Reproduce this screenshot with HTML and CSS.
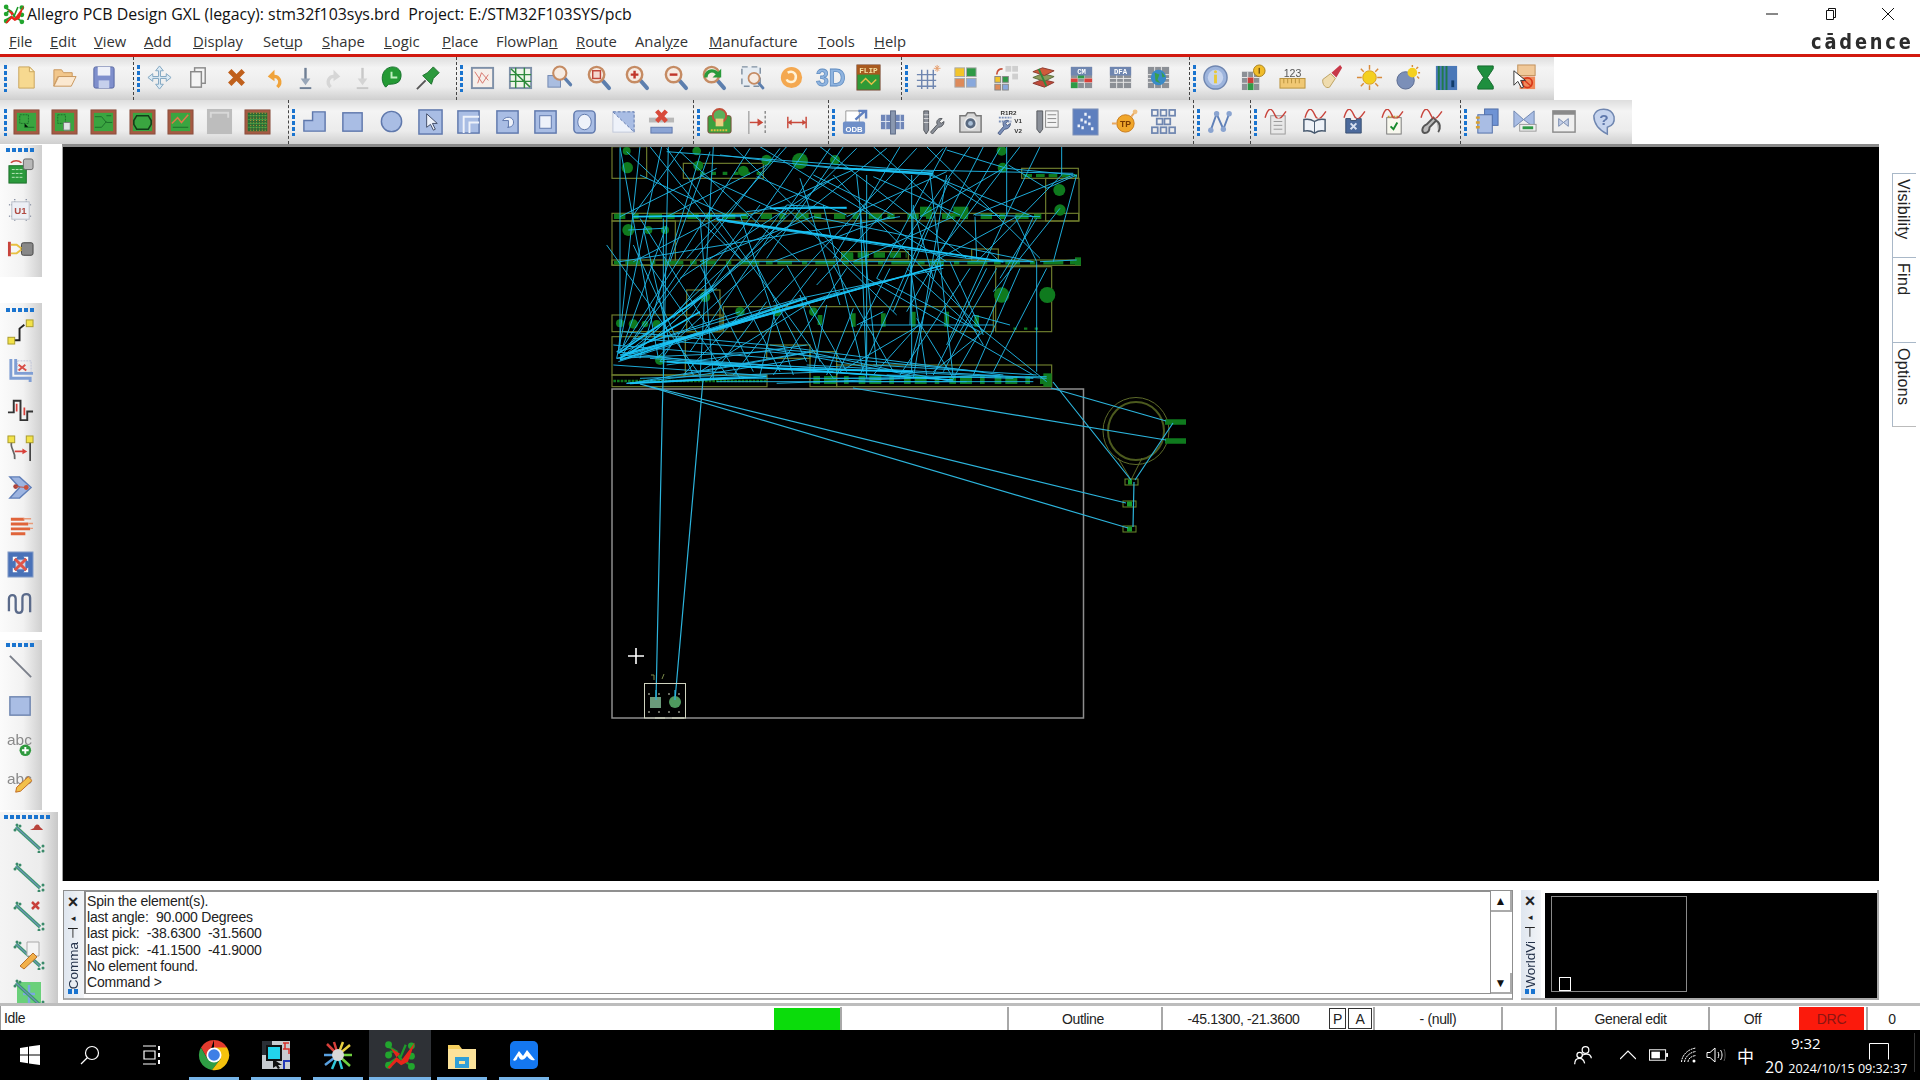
FILE: index.html
```html
<!DOCTYPE html>
<html lang="en">
<head>
<meta charset="utf-8">
<title>Allegro PCB Design GXL (legacy)</title>
<link rel="stylesheet" href="styles.css">
</head>
<body>
<svg class="defs" width="0" height="0" aria-hidden="true">
<symbol id="allegro" viewBox="0 0 28 28"><path d="M3 6l8 5 3 6 8 5M3 22l8-5M11 11l-6 0M19 5l-5 12" stroke="#1e9a2a" stroke-width="2" fill="none"/><circle cx="4" cy="5" r="3" fill="#22a52e"/><circle cx="4" cy="14" r="3" fill="#22a52e"/><circle cx="4" cy="23" r="3" fill="#22a52e"/><circle cx="24" cy="6" r="3" fill="#22a52e"/><circle cx="24" cy="15" r="3" fill="#22a52e"/><circle cx="24" cy="24" r="3" fill="#22a52e"/><path d="M3 25l8-9 4 3 12-16-6 17-6 3-4-3-6 6zM6 8l8 5-3 3z" fill="#e8251a"/></symbol>
<symbol id="board" viewBox="0 0 28 28"><rect x="1" y="2" width="26" height="25" fill="#a65a42" stroke="#8a5040"/><rect x="4" y="5" width="20" height="19" fill="#3aa540"/></symbol>
<symbol id="mag" viewBox="0 0 28 28"><path d="M18 17l7 8" stroke="#5d7fae" stroke-width="4" stroke-linecap="round"/><circle cx="12" cy="11" r="8" fill="#f6ebe2" stroke="#c58b63" stroke-width="2.500"/></symbol>
<symbol id="tbl" viewBox="0 0 28 28"><rect x="3" y="3" width="22" height="22" fill="#8c9096"/><path d="M3 11h22M3 15h22M3 19h22M10 3v22M17 3v22" stroke="#e8e8e8"/></symbol>
<symbol id="wave" viewBox="0 0 28 12"><path d="M1 11C5 -3 9 -2 13 7s7 6 14-4" stroke="#c8443c" stroke-width="1.800" fill="none"/></symbol>
<symbol id="net" viewBox="0 0 32 30"><path d="M3 4l24 22" stroke="#3a9a6a" stroke-width="3.400"/><path d="M3 4l24 22" stroke="#6d90b8" stroke-width="1.200"/><circle cx="4" cy="2" r="1.500" fill="#3a8a6a"/><circle cx="2" cy="7" r="1.500" fill="#3a8a6a"/><circle cx="7" cy="3" r="1.500" fill="#3a8a6a"/><circle cx="30" cy="23" r="1.500" fill="#3a8a6a"/><circle cx="30" cy="28" r="1.500" fill="#3a8a6a"/><circle cx="26" cy="29" r="1.500" fill="#3a8a6a"/></symbol>
</svg>

<header class="chrome">
  <div class="titlebar">
    <svg class="appicon"><use href="#allegro"/></svg>
    <span class="title">Allegro PCB Design GXL (legacy): stm32f103sys.brd&nbsp; Project: E:/STM32F103SYS/pcb</span>
    <div class="winctl">
      <svg viewBox="0 0 14 14"><path d="M1 7h12" stroke="#111"/></svg>
      <svg viewBox="0 0 14 14"><path d="M3.500 3.500h7v9h-7zM5.500 3.500v-2h7v9h-2" fill="none" stroke="#111"/></svg>
      <svg viewBox="0 0 14 14"><path d="M1 1l12 12M13 1L1 13" stroke="#111"/></svg>
    </div>
  </div>
  <div class="menubar">
    <nav class="menu">
      <span><u>F</u>ile</span><span><u>E</u>dit</span><span><u>V</u>iew</span><span><u>A</u>dd</span><span><u>D</u>isplay</span><span>Set<u>u</u>p</span><span><u>S</u>hape</span><span><u>L</u>ogic</span><span><u>P</u>lace</span><span>FlowPla<u>n</u></span><span><u>R</u>oute</span><span>Anal<u>y</u>ze</span><span><u>M</u>anufacture</span><span><u>T</u>ools</span><span><u>H</u>elp</span>
    </nav>
    <div class="logo">cādence</div>
  </div>
</header>

<section class="toolbars">
  <div class="tbrow r1">
    <div class="grp w133"><i class="grip"></i>
      <b><svg viewBox="0 0 28 28"><path d="M6 3h11l5 5v17H6z" fill="#f7d990" stroke="#c9a45c"/><path d="M17 3v5h5z" fill="#fff3c9" stroke="#c9a45c"/></svg></b>
      <b><svg viewBox="0 0 28 28"><path d="M3 23V6h8l2 3h9v4H7z" fill="#f2c78c" stroke="#c8965c"/><path d="M3 23l5-10h18l-5 10z" fill="#fbe8d0" stroke="#c8965c"/></svg></b>
      <b><svg viewBox="0 0 28 28"><rect x="4" y="3" width="21" height="22" rx="2" fill="#7f8fcc" stroke="#56669f"/><rect x="8" y="3" width="13" height="9" fill="#eef0f8"/><rect x="9" y="17" width="11" height="8" fill="#c6d0ec"/></svg></b>
    </div>
    <div class="grp w323"><i class="grip"></i>
      <b><svg viewBox="0 0 28 28"><path d="M14 2l4 5h-3v6h6v-3l5 4-5 4v-3h-6v6h3l-4 5-4-5h3v-6H7v3l-5-4 5-4v3h6V7h-3z" fill="#dceaf4" stroke="#7fa4bf"/></svg></b>
      <b><svg viewBox="0 0 28 28"><rect x="11" y="4" width="11" height="16" fill="#f4f4f4" stroke="#8a8a8a" stroke-width="1.500"/><rect x="7" y="8" width="11" height="16" fill="#f4f4f4" stroke="#8a8a8a" stroke-width="1.500"/></svg></b>
      <b><svg viewBox="0 0 28 28"><path d="M7 7l14 14M21 7L7 21" stroke="#c0601c" stroke-width="5"/></svg></b>
      <b class="narrow-a"><svg viewBox="0 0 28 28"><path d="M17 24c5-5 2-12-5-11" stroke="#f0a33a" stroke-width="3.500" fill="none"/><path d="M14 6l-7 7 7 5z" fill="#f0a33a"/></svg></b>
      <b class="narrow"><svg viewBox="0 0 28 28"><path d="M14 4v14" stroke="#6f7f95" stroke-width="2.500"/><path d="M9 15l5 7 5-7z" fill="#98a6b8"/><path d="M8 25h12" stroke="#6f7f95" stroke-width="2"/></svg></b>
      <b class="narrow"><svg viewBox="0 0 28 28"><path d="M11 24c-5-5-2-12 5-11" stroke="#d6d6d6" stroke-width="3.500" fill="none"/><path d="M14 6l7 7-7 5z" fill="#d6d6d6"/></svg></b>
      <b class="narrow"><svg viewBox="0 0 28 28"><path d="M14 4v14" stroke="#c8c8c8" stroke-width="2.500"/><path d="M9 15l5 7 5-7z" fill="#d4d4d4"/><path d="M8 25h12" stroke="#c8c8c8" stroke-width="2"/></svg></b>
      <b class="narrow-b"><svg viewBox="0 0 28 28"><path d="M8 24C2 18 3 4 15 3c9 0 11 9 7 15-3 3-8 3-11 3z" fill="#249a34" stroke="#14702a"/><path d="M14 8v6h6" stroke="#bff0bf" fill="none" stroke-width="2"/></svg></b>
      <b class="pin"><svg viewBox="0 0 28 28"><path d="M2 26l9-9" stroke="#555" stroke-width="2"/><path d="M8 12l9 9 2-6 6-6-6-6-6 6z" fill="#2d9a3e" stroke="#1b6e2b"/></svg></b>
    </div>
    <div class="grp w445 nudge"><i class="grip"></i>
      <b><svg viewBox="0 0 28 28"><rect x="3" y="4" width="22" height="21" fill="#f6efea" stroke="#7e90a8" stroke-width="2"/><path d="M6 8l8 12 6-9M9 20l4-11 7 8" stroke="#d6746a" fill="none"/></svg></b>
      <b><svg viewBox="0 0 28 28"><rect x="3" y="4" width="22" height="21" fill="#eef4ea" stroke="#7e90a8" stroke-width="2"/><path d="M9 4v21M18 4v21M3 11h22M3 18h22M4 5l20 19" stroke="#2d8a3c" stroke-width="1.500"/></svg></b>
      <b><svg viewBox="0 0 28 28"><rect x="2" y="12" width="13" height="12" fill="#a9bde0" stroke="#6f86b0"/><use href="#mag" x="4" y="0" width="24" height="24"/></svg></b>
      <b><svg viewBox="0 0 28 28"><use href="#mag"/><rect x="8" y="7" width="8" height="8" fill="#f4d8d0" stroke="#c0463a" stroke-width="1.500"/></svg></b>
      <b><svg viewBox="0 0 28 28"><use href="#mag"/><path d="M8 11h8M12 7v8" stroke="#c0362a" stroke-width="2.500"/></svg></b>
      <b><svg viewBox="0 0 28 28"><use href="#mag"/><path d="M8 11h8" stroke="#c0362a" stroke-width="2.500"/></svg></b>
      <b><svg viewBox="0 0 28 28"><use href="#mag"/><path d="M6 14c0-6 6-9 11-5l3 3" stroke="#2a9a3a" stroke-width="3.500" fill="none"/><path d="M22 5v9h-9z" fill="#2a9a3a"/></svg></b>
      <b><svg viewBox="0 0 28 28"><rect x="3" y="3" width="19" height="20" fill="#e6ecf2" stroke="#7e8ea0" stroke-width="1.500" stroke-dasharray="6 4"/><use href="#mag" x="7" y="7" width="20" height="20"/></svg></b>
      <b><svg viewBox="0 0 28 28"><circle cx="14" cy="14" r="11" fill="#f4a850"/><path d="M10 9c6-3 10 2 8 7-2 4-8 3-9 0" stroke="#fff3d8" stroke-width="2.500" fill="none"/></svg></b>
      <b><svg viewBox="0 0 28 28"><text x="0" y="23" class="t3d">3D</text></svg></b>
      <b><svg viewBox="0 0 28 28"><rect x="2" y="1" width="24" height="26" fill="#2f9a36" stroke="#7d4a38"/><rect x="2" y="1" width="24" height="10" fill="#a85a20"/><text x="14" y="9.500" class="tflip">FLIP</text><path d="M6 20l5-5 6 6 5-5" stroke="#e6c04a" fill="none" stroke-width="1.500"/></svg></b>
    </div>
    <div class="grp w288"><i class="grip"></i>
      <b><svg viewBox="0 0 28 28"><path d="M8 6v20M14 6v20M20 6v20M3 11h20M3 17h20M3 23h20" stroke="#6f86b0" stroke-width="1.500"/><path d="M24 1v7M20.500 4.500h7M22 2l4 5M26 2l-4 5" stroke="#e6a070"/></svg></b>
      <b><svg viewBox="0 0 28 28"><rect x="3" y="4" width="10" height="9" fill="#f2c42a" stroke="#aaa"/><rect x="15" y="4" width="10" height="9" fill="#2f9a46" stroke="#aaa"/><rect x="3" y="15" width="10" height="9" fill="#dd8a5a" stroke="#aaa"/><rect x="15" y="15" width="10" height="9" fill="#88a8dc" stroke="#aaa"/></svg></b>
      <b><svg viewBox="0 0 28 28"><rect x="15" y="2" width="6" height="6" fill="#cfcfcf"/><rect x="22" y="2" width="6" height="6" fill="#cfcfcf"/><rect x="22" y="10" width="6" height="6" fill="#cfcfcf"/><rect x="4" y="13" width="6" height="6" fill="#f2c42a" stroke="#888"/><rect x="12" y="13" width="6" height="6" fill="#2f9a46" stroke="#888"/><rect x="4" y="21" width="6" height="6" fill="#dd8a5a" stroke="#888"/><rect x="12" y="21" width="6" height="6" fill="#88a8dc" stroke="#888"/><path d="M6 11c0-5 3-6 6-6" stroke="#c8503a" stroke-width="1.800" fill="none"/></svg></b>
      <b><svg viewBox="0 0 28 28"><path d="M3 20l10-4 12 3-10 5z" fill="#c04a3a" stroke="#8a3a30"/><path d="M3 14l10-4 12 3-10 5z" fill="#8a9a5a" stroke="#5a6a3a"/><path d="M3 8l10-4 12 3-10 5z" fill="#d05a3a" stroke="#8a3a30"/><path d="M9 5l8 18" stroke="#2f8a3e" stroke-width="2"/></svg></b>
      <b><svg viewBox="0 0 28 28"><use href="#tbl"/><rect x="10" y="11" width="7" height="4" fill="#2f9a46"/><rect x="3" y="15" width="7" height="4" fill="#d8403a"/><rect x="17" y="15" width="8" height="4" fill="#d8403a"/><rect x="3" y="19" width="7" height="6" fill="#2f9a46"/><rect x="3" y="3" width="22" height="9" fill="#6f86b0"/><text x="14" y="10.500" class="tsm">CM</text></svg></b>
      <b><svg viewBox="0 0 28 28"><use href="#tbl"/><rect x="3" y="3" width="22" height="9" fill="#6f86b0"/><text x="14" y="10.500" class="tsm">DFA</text></svg></b>
      <b><svg viewBox="0 0 28 28"><use href="#tbl"/><circle cx="14" cy="14" r="8" fill="#3a8ac8"/><path d="M10 9l5 2-2 5 3 4-5-2zM17 8l4 5-3 1z" fill="#3aa04a"/></svg></b>
    </div>
    <div class="grp grow nudge"><i class="grip"></i>
      <b><svg viewBox="0 0 28 28"><circle cx="14" cy="14" r="12" fill="#9db4dc" stroke="#6f86b0" stroke-width="1.500"/><circle cx="14" cy="14" r="8" fill="#c6d4ee"/><path d="M14 11v9" stroke="#e8c83a" stroke-width="3"/><circle cx="14" cy="8" r="1.600" fill="#e8c83a"/></svg></b>
      <b><svg viewBox="0 0 28 28"><rect x="2" y="8" width="18" height="19" fill="#8c9096"/><path d="M2 14h18M2 20h18M8 8v19M14 8v19" stroke="#e8e8e8"/><rect x="8" y="14" width="6" height="6" fill="#c8403a"/><rect x="8" y="20" width="6" height="7" fill="#2f9a46"/><circle cx="20" cy="7" r="6" fill="#f0bc2a" stroke="#a8801a"/><path d="M20 4v6" stroke="#7a5a10" stroke-width="1.500"/></svg></b>
      <b><svg viewBox="0 0 28 28"><text x="14" y="13" class="t123">123</text><rect x="1" y="15" width="26" height="10" fill="#f0c874" stroke="#b8923c"/><path d="M5 15v5M9 15v5M13 15v5M17 15v5M21 15v5" stroke="#b8923c"/></svg></b>
      <b><svg viewBox="0 0 28 28"><path d="M5 16l8-6 5 5-6 9c-4 2-8-3-7-8z" fill="#efdcae" stroke="#bba060"/><path d="M14 9l9-8 2 3-6 10z" fill="#c83848"/></svg></b>
      <b><svg viewBox="0 0 28 28"><circle cx="14" cy="14" r="7" fill="#f4d020" stroke="#d8a020"/><path d="M14 1v5M14 22v5M1 14h5M22 14h5M5 5l3 3M20 20l3 3M23 5l-3 3M8 20l-3 3" stroke="#d88a3a" stroke-width="1.500"/></svg></b>
      <b><svg viewBox="0 0 28 28"><circle cx="11" cy="17" r="9" fill="#7b8fb8" stroke="#5a6a90"/><circle cx="18" cy="9" r="5" fill="#f4d020"/><path d="M18 1v2M26 9h-2M24 3l-2 2M25 15l-2-2" stroke="#d88a3a" stroke-width="1.500"/></svg></b>
      <b><svg viewBox="0 0 28 28"><rect x="3" y="2" width="22" height="25" fill="#4a78b8"/><path d="M6 2v25M10 2v25M14 2v25" stroke="#1f7a4a" stroke-width="2"/><rect x="19" y="17" width="3" height="7" fill="#123c6a"/></svg></b>
      <b><svg viewBox="0 0 28 28"><path d="M6 2h16v3l-6 9 6 9v3H6v-3l6-9-6-9z" fill="#1e8f3e" stroke="#14682c"/></svg></b>
      <b><svg viewBox="0 0 28 28"><rect x="7" y="1" width="18" height="11" fill="#f0c898" stroke="#c0905a"/><rect x="9" y="13" width="16" height="13" fill="#f08a5a"/><circle cx="17" cy="19.500" r="5" fill="none" stroke="#d8381a" stroke-width="1.800"/><path d="M13 16l8 7" stroke="#d8381a" stroke-width="1.500"/><path d="M3 7v15l4-4 4 7 2-1-3-7h5z" fill="#fff" stroke="#333"/></svg></b>
    </div>
  </div>

  <div class="tbrow r2">
    <div class="grp w288"><i class="grip"></i>
      <b><svg viewBox="0 0 28 28"><use href="#board"/><rect x="7" y="7" width="9" height="9" fill="none" stroke="#1c6e2a" stroke-dasharray="2 1"/><path d="M16 20h6M12 16v4h4" stroke="#1c6e2a"/></svg></b>
      <b><svg viewBox="0 0 28 28"><use href="#board"/><rect x="7" y="7" width="8" height="9" fill="none" stroke="#1c6e2a" stroke-dasharray="2 1"/><rect x="13" y="15" width="7" height="8" rx="1" fill="#dfe3e4" stroke="#777"/></svg></b>
      <b><svg viewBox="0 0 28 28"><use href="#board"/><path d="M5 9h7l5 6h6M5 20h7l5-6M17 8h5" stroke="#1c6e2a" fill="none"/></svg></b>
      <b><svg viewBox="0 0 28 28"><use href="#board"/><path d="M8 8h12l3 5v4l-3 5H8l-3-5v-4z" fill="none" stroke="#123d18" stroke-width="1.600"/></svg></b>
      <b><svg viewBox="0 0 28 28"><use href="#board"/><path d="M5 16l6-6 4 5 7-8" stroke="#dd7a4a" fill="none" stroke-width="1.600"/><path d="M6 20h16" stroke="#1c6e2a"/></svg></b>
      <b><svg viewBox="0 0 28 28"><rect x="1" y="1" width="26" height="26" fill="#bdbdbd"/><path d="M5 10V5h18v5" stroke="#d8d8d8" stroke-width="2" fill="none"/></svg></b>
      <b><svg viewBox="0 0 28 28"><use href="#board"/><rect x="4" y="5" width="20" height="19" fill="#2d6a34"/><path d="M7 5v19M10 5v19M13 5v19M16 5v19M19 5v19M22 5v19" stroke="#d8a03a" stroke-dasharray="1 1.500"/><path d="M4 8h20M4 12h20M4 16h20M4 20h20" stroke="#46b04a" stroke-width=".7"/></svg></b>
    </div>
    <div class="grp w405 nudge"><i class="grip"></i>
      <b><svg viewBox="0 0 28 28"><path d="M3 24V13h9V4h13v20z" fill="#a9bde4" stroke="#5f78ac" stroke-width="1.500"/></svg></b>
      <b><svg viewBox="0 0 28 28"><rect x="4" y="5" width="20" height="19" fill="#a9bde4" stroke="#5f78ac" stroke-width="1.500"/></svg></b>
      <b><svg viewBox="0 0 28 28"><circle cx="14" cy="14" r="10.500" fill="#a9bde4" stroke="#5f78ac" stroke-width="1.500"/></svg></b>
      <b><svg viewBox="0 0 28 28"><rect x="2" y="2" width="24" height="25" fill="#a9bde4" stroke="#5f78ac" stroke-width="1.500"/><path d="M10 6v14l4-3 3 6 2-1-3-6h5z" fill="#eef2fa" stroke="#3e4a66"/></svg></b>
      <b><svg viewBox="0 0 28 28"><rect x="3" y="3" width="22" height="23" fill="#a9bde4" stroke="#5f78ac" stroke-width="1.500"/><path d="M9 26V9h16M15 26V15h10" stroke="#eef2fa" stroke-width="2" fill="none"/></svg></b>
      <b><svg viewBox="0 0 28 28"><rect x="3" y="3" width="22" height="23" fill="#a9bde4" stroke="#5f78ac" stroke-width="1.500"/><path d="M14 20c5 0 7-3 6-7-2-5-9-4-11 0h6v7z" fill="#eef2fa" stroke="#5f78ac"/></svg></b>
      <b><svg viewBox="0 0 28 28"><rect x="3" y="3" width="22" height="23" fill="#a9bde4" stroke="#5f78ac" stroke-width="1.500"/><rect x="8" y="8" width="12" height="13" fill="#eef2fa" stroke="#5f78ac"/></svg></b>
      <b><svg viewBox="0 0 28 28"><rect x="3" y="3" width="22" height="23" rx="4" fill="#a9bde4" stroke="#5f78ac" stroke-width="1.500"/><ellipse cx="14" cy="14.500" rx="7" ry="8" fill="#eef2fa" stroke="#5f78ac"/></svg></b>
      <b><svg viewBox="0 0 28 28"><rect x="3" y="4" width="22" height="21" fill="#eef2fa" stroke="#c0c8d8"/><path d="M3 4h22L25 25z" fill="#a9bde4" stroke="#5f78ac" stroke-width="1" stroke-dasharray="3 2"/></svg></b>
      <b><svg viewBox="0 0 28 28"><rect x="1" y="10" width="26" height="5" fill="#b8b8b8"/><rect x="3" y="20" width="22" height="6" fill="#8ba4d4" stroke="#5f78ac"/><path d="M9 3l10 11M19 3L9 14" stroke="#d84a3a" stroke-width="4.500"/></svg></b>
    </div>
    <div class="grp w135"><i class="grip"></i>
      <b><svg viewBox="0 0 28 28"><rect x="2" y="8" width="24" height="18" rx="2" fill="#3aa03e" stroke="#7d4a38"/><circle cx="14" cy="8" r="7" fill="#5ab05a" stroke="#c0503a" stroke-width="2"/><rect x="10" y="11" width="8" height="8" fill="#e8d080"/><path d="M5 23h18" stroke="#e0c040" stroke-width="2" stroke-dasharray="2 1"/></svg></b>
      <b><svg viewBox="0 0 28 28"><path d="M5 3v24" stroke="#a8a8a8" stroke-width="1.500"/><path d="M22 3v24" stroke="#888" stroke-dasharray="3 2" stroke-width="1.500"/><path d="M6 15h10" stroke="#c8483a" stroke-width="1.500"/><path d="M14 11l6 4-6 4z" fill="#c8483a"/></svg></b>
      <b><svg viewBox="0 0 28 28"><path d="M5 9v12M24 9v12M5 15h19" stroke="#c8483a" stroke-width="1.500"/><path d="M5 15l4-3v6zM24 15l-4-3v6z" fill="#c8483a"/></svg></b>
    </div>
    <div class="grp w365"><i class="grip"></i>
      <b><svg viewBox="0 0 28 28"><path d="M5 3h14v12H5z" fill="#fff" stroke="#999"/><rect x="2" y="14" width="23" height="13" rx="2" fill="#6f8fc8"/><text x="13.500" y="24.500" class="todb">ODB</text><path d="M15 12l10-9M18 3h8v8" stroke="#5f80c0" stroke-width="2.500" fill="none"/></svg></b>
      <b><svg viewBox="0 0 28 28"><rect x="2" y="7" width="24" height="15" fill="#6f86b8"/><path d="M7 7v15M12 7v15M17 7v15M22 7v15M2 14h24" stroke="#dfe5f0"/><rect x="12" y="3" width="5" height="24" fill="#8a98b0" stroke="#5a6884"/></svg></b>
      <b><svg viewBox="0 0 28 28"><path d="M6 3h5v20l-2.500 4L6 23z" fill="#8a8f98" stroke="#55585e"/><path d="M6 7h5M6 11h5M6 15h5" stroke="#ddd"/><path d="M13 25l7-8c-2-4 2-7 5-6l-3 3 2 2 3-2c0 4-3 6-6 6l-6 7z" fill="#8a8f98" stroke="#55585e"/></svg></b>
      <b><svg viewBox="0 0 28 28"><path d="M3 8h6l2-3h7l2 3h5v17H3z" fill="#d8d8d8" stroke="#777" stroke-width="1.500"/><circle cx="14" cy="16" r="6" fill="#5a6a80" stroke="#eee" stroke-width="1.500"/><circle cx="14" cy="16" r="2.500" fill="#aac0d8"/></svg></b>
      <b><svg viewBox="0 0 28 28"><text x="14" y="7" class="tr">R1R2</text><text x="24" y="16" class="tr">V1</text><text x="24" y="26" class="tr">V2</text><path d="M3 26l6-7c-2-4 1-7 5-6l-3 3 2 2 3-2c0 3-2 6-6 6l-5 6z" fill="#7a8fb8" stroke="#4e5f85"/><path d="M4 10h13M4 14h13" stroke="#7a8fb8" stroke-dasharray="2 1" stroke-width="2"/></svg></b>
      <b><svg viewBox="0 0 28 28"><path d="M3 3h6v19l-3 4-3-4z" fill="#8a8f98" stroke="#55585e"/><rect x="12" y="3" width="13" height="17" fill="#f4f4f4" stroke="#888"/><path d="M14 7h9M14 11h9M14 15h9" stroke="#888"/></svg></b>
      <b><svg viewBox="0 0 28 28"><rect x="1" y="1" width="26" height="27" fill="#5e7fbe" stroke="#7e92b8"/><path d="M14 5v3M18 8v3M10 11v3M14 13v3M18 15v3M7 17v3M11 19v3M21 20v3" stroke="#eef2fa" stroke-width="2.500"/></svg></b>
      <b><svg viewBox="0 0 28 28"><circle cx="15" cy="16" r="9" fill="#f0a62a" stroke="#c87a1a"/><text x="15" y="19.500" class="ttp">TP</text><path d="M1 16h5M21 9l4-5" stroke="#e8a860" stroke-width="2"/><circle cx="25" cy="4" r="2.500" fill="#f0c080"/></svg></b>
      <b><svg viewBox="0 0 28 28"><g fill="none" stroke="#6f86b0" stroke-width="1.800"><rect x="2" y="2" width="6" height="6"/><rect x="11" y="2" width="6" height="6"/><rect x="20" y="2" width="6" height="6"/><rect x="7" y="11" width="6" height="6"/><rect x="15" y="11" width="6" height="6"/><rect x="2" y="20" width="6" height="6"/><rect x="11" y="20" width="6" height="6"/><rect x="20" y="20" width="6" height="6"/></g></svg></b>
    </div>
    <div class="grp w57"><i class="grip"></i>
      <b><svg viewBox="0 0 28 28"><path d="M5 23L11 6l7 16 6-16" stroke="#5f80b8" stroke-width="2" fill="none"/><circle cx="5" cy="23" r="2.800" fill="#8aa4d0"/><circle cx="11" cy="6" r="2.800" fill="#8aa4d0"/><circle cx="18" cy="22" r="2.800" fill="#8aa4d0"/><circle cx="24" cy="6" r="2.800" fill="#8aa4d0"/></svg></b>
    </div>
    <div class="grp w210"><i class="grip"></i>
      <b><svg viewBox="0 0 28 28"><rect x="8" y="8" width="15" height="19" fill="#e8e8e8" stroke="#999"/><path d="M11 14h9M11 18h9M11 22h9" stroke="#999"/><use href="#wave" x="1" y="1" width="24" height="10"/></svg></b>
      <b><svg viewBox="0 0 28 28"><path d="M14 14c-3-2-7-3-11-2v12c4-1 8 0 11 2 3-2 7-3 11-2V12c-4-1-8 0-11 2z" fill="#eef2f8" stroke="#46586e" stroke-width="1.500"/><path d="M14 14v12" stroke="#46586e"/><use href="#wave" x="3" y="1" width="24" height="10"/></svg></b>
      <b><svg viewBox="0 0 28 28"><path d="M6 11h5v2h6v-2h5v15H6z" fill="#4c6a9c" stroke="#3a5070"/><path d="M11 16l6 6M17 16l-6 6" stroke="#d8e0f0" stroke-width="2"/><use href="#wave" x="3" y="1" width="24" height="10"/></svg></b>
      <b><svg viewBox="0 0 28 28"><rect x="8" y="10" width="15" height="17" fill="#f8f8ee" stroke="#777"/><path d="M10 10v-2M13 10v-2M16 10v-2M19 10v-2" stroke="#c8a040" stroke-width="2"/><path d="M12 19l3 3 4-7" stroke="#188a2c" stroke-width="2" fill="none"/><use href="#wave" x="2" y="1" width="24" height="10"/></svg></b>
      <b><svg viewBox="0 0 28 28"><path d="M8 26c-4-1-3-7 2-9l7-7 3 3-7 7c0 4-2 6-5 6zM20 13c4 2 5 8 2 12" stroke="#555" stroke-width="2" fill="#bbb"/><use href="#wave" x="3" y="1" width="24" height="10"/></svg></b>
    </div>
    <div class="grp grow"><i class="grip"></i>
      <b><svg viewBox="0 0 28 28"><rect x="12" y="1" width="14" height="17" fill="#6f93d4" stroke="#506ea8"/><rect x="5" y="7" width="15" height="19" fill="#a9bde4" stroke="#506ea8"/><path d="M3 10h4M3 15h4M3 20h4" stroke="#d8a030" stroke-width="2.500"/></svg></b>
      <b><svg viewBox="0 0 28 28"><path d="M3 3l10 9L24 3v17L13 12 3 20z" fill="#a9bde4" stroke="#6f86b0"/><rect x="9" y="17" width="17" height="7" fill="#eee" stroke="#999"/><rect x="12" y="19" width="11" height="3" fill="#2f9a46"/></svg></b>
      <b><svg viewBox="0 0 28 28"><rect x="3" y="3" width="23" height="22" fill="#efefef" stroke="#8a8a8a" stroke-width="1.500"/><rect x="3" y="3" width="23" height="4" fill="#8a8a8a"/><path d="M9 11l5 4 5-4v8l-5-4-5 4z" fill="#c6d0e8" stroke="#7a8db0"/></svg></b>
      <b><svg viewBox="0 0 28 28"><path d="M5 8c3-9 18-9 21 1 1 7-3 10-7 11v7c-6-3-14-8-14-19z" fill="#c6d4ee" stroke="#6f86b0" stroke-width="1.500"/><text x="15.500" y="18" class="thelp">?</text></svg></b>
    </div>
  </div>
</section>

<main class="work">
  <aside class="lefttools">
    <div class="vgrp vg1"><i class="vgrip"></i>
      <b><svg viewBox="0 0 28 28"><rect x="2" y="8" width="18" height="18" fill="#2a9a3c" stroke="#1c6e2a"/><path d="M5 12h12M5 16h12M5 20h12" stroke="#bfe8bf" stroke-dasharray="3 1"/><rect x="17" y="1" width="10" height="11" rx="2" fill="#b8b8b8" stroke="#666"/><path d="M4 5c3-3 8-3 11 0" stroke="#c8443c" stroke-width="1.500" fill="none"/></svg></b>
      <b><svg viewBox="0 0 28 28"><path d="M2 8h24M2 20h24M8 2v24M20 2v24" stroke="#8a92a4" stroke-dasharray="1 1" stroke-width="1.500"/><rect x="5" y="5" width="18" height="18" fill="#eceff5" stroke="#b8bdc8"/><text x="14" y="18" class="tu1">U1</text></svg></b>
      <b><svg viewBox="0 0 28 28"><rect x="15" y="7" width="12" height="13" rx="2" fill="#888" stroke="#444"/><rect x="1" y="6" width="3" height="15" fill="#c8443c"/><path d="M4 9h6l5 4M4 18h6l5-4" stroke="#e8c040" stroke-width="2" fill="none"/></svg></b>
    </div>
    <div class="vgrp vg2"><i class="vgrip"></i>
      <b><svg viewBox="0 0 28 28"><path d="M6 23h7V11l5-4" stroke="#222" stroke-width="2" fill="none"/><rect x="1" y="20" width="7" height="7" fill="#f2e24a" stroke="#a89a2a"/><rect x="20" y="2" width="7" height="7" fill="#f2e24a" stroke="#a89a2a"/></svg></b>
      <b><svg viewBox="0 0 28 28"><rect x="11" y="4" width="14" height="12" fill="none" stroke="#c0c4d8" stroke-dasharray="2 1"/><path d="M4 2v20h20v4M9 2v15h18" stroke="#7f9ed4" stroke-width="3" fill="none"/><path d="M12 8l8 6M19 8l-7 6" stroke="#d8504a" stroke-width="2"/></svg></b>
      <b><svg viewBox="0 0 28 28"><path d="M1 17h6V5h7v20h7v-9h6" stroke="#333" stroke-width="2" fill="none"/><path d="M10 8v8M18 12v8" stroke="#d8403a" stroke-width="1.800"/></svg></b>
      <b><svg viewBox="0 0 28 28"><path d="M5 7c-3 6 4 9 3 18" stroke="#666" stroke-width="1.800" fill="none"/><path d="M24 7v20" stroke="#444" stroke-width="1.800"/><path d="M8 17h10" stroke="#d8403a" stroke-width="1.800"/><path d="M16 14l5 3-5 3z" fill="#d8403a"/><rect x="1" y="1" width="7" height="7" fill="#f2e24a" stroke="#a89a2a"/><rect x="20" y="1" width="7" height="7" fill="#f2e24a" stroke="#a89a2a"/></svg></b>
      <b><svg viewBox="0 0 28 28"><path d="M3 3h10l12 11-12 11H3l10-11z" fill="#9db4e0" stroke="#5f7eb8" stroke-width="1.500"/><circle cx="9" cy="13" r="2.500" fill="#a8403a"/><circle cx="20" cy="14" r="2.500" fill="#c8503a"/><path d="M9 13l11 1" stroke="#c8503a"/></svg></b>
      <b><svg viewBox="0 0 28 28"><path d="M4 6h14v3H4zM4 11h18v3H4zM4 16h20v3H4zM4 21h15v3H4z" fill="#e0643a"/><path d="M17 7h8M22 12h5M24 17h3" stroke="#e89a7a" stroke-width="1.500"/></svg></b>
      <b><svg viewBox="0 0 28 28"><rect x="1" y="1" width="26" height="26" fill="#4a72b8" stroke="#8aa0c8"/><path d="M6 6h5l-5 5zM22 6h-5l5 5zM6 22h5l-5-5zM22 22h-5l5-5z" fill="#fff"/><rect x="9" y="9" width="10" height="10" fill="#cdd8ec"/><path d="M8 8l12 12M20 8L8 20" stroke="#e0564a" stroke-width="3"/></svg></b>
      <b><svg viewBox="0 0 28 28"><path d="M2 22V9c0-5 7-5 7 0v11c0 5 7 5 7 0V8c0-5 8-5 8 0v15" stroke="#5a6a8a" stroke-width="2.400" fill="none"/></svg></b>
    </div>
    <div class="vgrp vg3"><i class="vgrip"></i>
      <b><svg viewBox="0 0 28 28"><path d="M3 3l22 22" stroke="#7a7f8a" stroke-width="2"/></svg></b>
      <b><svg viewBox="0 0 28 28"><rect x="3" y="5" width="21" height="19" fill="#a9bde4" stroke="#6f86b0" stroke-width="1.500"/></svg></b>
      <b><svg viewBox="0 0 28 28"><text x="0" y="14" class="tabc">abc</text><circle cx="19" cy="20" r="6" fill="#2f9a3e"/><path d="M15.500 20h7M19 16.500v7" stroke="#fff" stroke-width="2"/></svg></b>
      <b><svg viewBox="0 0 28 28"><text x="0" y="14" class="tabc">abc</text><path d="M9 23l1-5 12-11 4 4-12 11z" fill="#f2c04a" stroke="#c06a20"/></svg></b>
    </div>
    <div class="vgrp vg4"><i class="vgrip wide"></i>
      <b><svg viewBox="0 0 32 30"><use href="#net"/><path d="M17 7h13c-1-2-3-2-4-5-3-2-5 2-5 3z" fill="#b8443c"/></svg></b>
      <b><svg viewBox="0 0 32 30"><use href="#net"/></svg></b>
      <b><svg viewBox="0 0 32 30"><use href="#net"/><path d="M19 1l7 7M26 1l-7 7" stroke="#c8403a" stroke-width="2.500"/></svg></b>
      <b><svg viewBox="0 0 32 30"><use href="#net"/><path d="M14 2h12v14H14z" fill="#f4f4f4" stroke="#aaa"/><path d="M7 26l13-13 4 4-13 12z" fill="#f2b04a" stroke="#b8702a"/></svg></b>
      <b><svg viewBox="0 0 32 30"><rect x="4" y="3" width="24" height="24" fill="#6ad07a"/><path d="M16 6v18M10 15h12" stroke="#7aa8e0" stroke-width="2.500"/><use href="#net"/></svg></b>
    </div>
  </aside>

  <div class="center">
    <div class="canvas">
      <svg class="pcb" viewBox="63 147 1815 734" preserveAspectRatio="none">
        <g transform="translate(600 145) scale(.33333)">
          <g fill="none" stroke="#6f7e2e" stroke-width="3.500">
            <rect x="36" y="5" width="104" height="95"/><rect x="250" y="55" width="240" height="45"/><rect x="1265" y="70" width="170" height="30"/><rect x="1337" y="100" width="100" height="128"/><rect x="36" y="205" width="1400" height="23"/><rect x="36" y="228" width="190" height="132"/><rect x="36" y="345" width="1405" height="16"/><rect x="1187" y="365" width="168" height="195"/><rect x="1115" y="312" width="80" height="35"/><rect x="36" y="510" width="330" height="50"/><rect x="370" y="485" width="810" height="75"/><rect x="260" y="435" width="100" height="125"/><rect x="36" y="575" width="220" height="115"/><rect x="36" y="690" width="465" height="35"/><rect x="500" y="600" width="130" height="40"/><rect x="630" y="620" width="80" height="105"/><rect x="710" y="660" width="645" height="65"/><rect x="725" y="320" width="200" height="25"/>
          </g>
          <g fill="none" stroke="#0f7a1e">
            <path d="M42 214H1330" stroke-width="16" stroke-dasharray="34 22 18 30 40 16 22 38"/>
            <path d="M42 353H1440" stroke-width="11" stroke-dasharray="20 14 44 30 16 24 60 20"/>
            <path d="M1270 92H1430" stroke-width="10" stroke-dasharray="26 12"/>
            <path d="M640 705H1350" stroke-width="24" stroke-dasharray="20 12 36 24 14 30"/>
            <path d="M40 708H500" stroke-width="8" stroke-dasharray="8 3"/>
            <path d="M725 330H920" stroke-width="16" stroke-dasharray="34 14"/>
            <path d="M300 85H490" stroke-width="10" stroke-dasharray="14 20"/>
            <path d="M660 510V540M760 505V545M850 505V545M940 500V545M1040 500V545M1130 510V545" stroke-width="14"/>
            <path d="M1240 551H1315" stroke-width="7" stroke-dasharray="10 22"/>
          </g>
          <g fill="#0f7a1e">
            <circle cx="82" cy="68" r="17"/><circle cx="80" cy="18" r="12"/><circle cx="290" cy="18" r="13"/><circle cx="295" cy="62" r="15"/><circle cx="430" cy="78" r="16"/><circle cx="500" cy="45" r="16"/><circle cx="600" cy="48" r="24"/><circle cx="705" cy="45" r="15"/><circle cx="1205" cy="17" r="15"/><circle cx="1208" cy="68" r="15"/><circle cx="1378" cy="135" r="18"/><circle cx="1380" cy="195" r="17"/><circle cx="85" cy="255" r="18"/><circle cx="145" cy="255" r="12"/><circle cx="195" cy="255" r="12"/><circle cx="1205" cy="450" r="23"/><circle cx="1342" cy="450" r="24"/><circle cx="530" cy="500" r="14"/><circle cx="640" cy="500" r="13"/><circle cx="420" cy="500" r="14"/><circle cx="60" cy="535" r="12"/><circle cx="100" cy="537" r="14"/><circle cx="135" cy="537" r="10"/><circle cx="170" cy="537" r="12"/><circle cx="180" cy="645" r="15"/><circle cx="315" cy="455" r="16"/>
            <rect x="1060" y="185" width="45" height="30"/><rect x="960" y="185" width="35" height="30"/><rect x="730" y="325" width="30" height="20"/><rect x="1425" y="337" width="18" height="24"/><rect x="1330" y="685" width="25" height="40"/>
          </g>
          <path class="rats" d="M60 5L175 640M120 5L55 620M185 5L50 640M205 5L190 710M340 5L300 700M200 10L700 700M80 20L430 350M330 20L210 350M450 10L60 620M540 10L90 600M620 10L180 650M690 10L270 620M770 10L340 430M860 10L430 350M950 10L520 470M1030 10L650 420M1040 5L830 400M1200 10L920 500M1220 5V210M1385 5V90M1385 90L1130 350M1380 190L1180 440M1220 210L1040 600M1300 215L1150 560M1125 215L1130 340M1245 215L1310 350M1040 90L940 700M990 90L1060 700M935 90L935 680M800 90L800 690M770 90L830 660M700 90L1150 560M620 60L1000 90M360 30L700 70L1420 85M200 20L1000 80M1040 15L1220 70L1425 90M720 70L1000 90M1225 60L1340 130L1430 90M990 90L1300 215M560 180L740 190M440 200L560 185M100 215L420 215M1125 210L1320 215M350 225L1210 350M380 230L1100 340L1300 350M85 255L190 250M430 350L1300 350M1320 350L1430 345M1030 360L50 640M1030 370L600 460L150 590M840 410L60 630M720 440L55 650M610 460L180 600M350 430L50 620M340 420L60 640M430 350L150 590M420 350L210 540M1190 370L1080 560M1310 350V680M1050 350L1150 570M1000 350L1150 600M930 360L980 690M1020 330L930 660M830 400L1140 560M800 400L1300 690M1150 560L1000 680M1140 560L1060 700M1130 540L1340 710M1120 510L1230 540M1120 510L1030 680M780 540H1180M770 540L850 500M960 540L720 680M955 540L820 690M950 520L1060 700M680 480L640 680M600 450L660 650M530 480L480 690M500 470L330 700M420 500L60 620M620 480L300 680M760 490L680 690M190 220L190 700M300 220L340 700M200 240L70 600M130 250L210 600M300 30L120 640M240 20L600 350M120 220L420 700M1000 200L780 690M600 100L720 480M670 180L790 680M780 190L800 700M940 180L930 540M940 190L1000 400M1050 100L880 500M420 210L580 690M560 180L430 350M480 180L220 520M560 190L890 510M700 100L240 400M1430 90L1360 350M1310 220L1200 400M50 640L500 620L1150 680M50 620L300 650L700 670M180 650L480 660L1300 700M80 715L500 690M80 715L430 700M90 715L630 620M80 715L300 690L620 640M120 700L700 680M530 715L1200 690M620 620L900 680L1060 710M500 610L930 690M640 710L1300 710M820 660L1310 690M510 600L1210 690M60 630L500 660"/>
          <path class="rats" d="M150 5L420 340M250 5L100 210M400 5L800 400M480 5L1040 350M560 5L260 340M660 5L1100 340M730 5L500 340M820 5L1200 350M900 5L700 340M980 5L1320 340M1110 5L880 340M1150 5L1040 220M1260 5L1010 330M1320 5L1220 210M20 300L300 690M100 300L280 690M150 360L380 690M250 360L60 640M380 360L100 620M470 360L170 640M550 370L250 690M650 370L400 690M740 370L520 690M870 370L710 690M920 370L1130 560M1110 370L900 690M1160 370L1000 690M1260 370L1120 690M1340 370L1180 680M700 360L880 680M560 360L740 680M470 360L620 650M380 360L540 680M300 360L460 680M60 10L60 620M1420 90L1120 210M1000 90L1200 215M820 95L1080 210M640 90L880 210M470 95L740 210M300 90L560 210M120 90L380 210M60 215L350 70M200 215L500 60M440 215L770 70M740 215L1040 80M960 215L1210 70M100 350L360 215M300 350L640 215M520 350L870 215M760 350L1060 215M1000 350L1250 215M60 350L900 215M1300 350L640 215M200 660L620 600M250 690L640 620M150 640L800 690M300 700L900 700M350 710L1100 710M620 660L1340 700M700 700L1340 695M860 690L1240 700M40 600L520 640M40 660L470 690M70 560L500 600M100 580L620 620"/>
          <path class="rats thick" d="M55 625L340 430M60 640L300 500M70 630L1030 360M60 645L620 460M350 222L1210 350M440 210L100 215M90 715L500 695M200 650L1060 705M530 670L940 680M730 70L1000 85M510 190L740 188"/>
        </g>
        <g fill="none">
          <rect x="612" y="389" width="471.500" height="329" stroke="#8d8d8d" stroke-width="1.500"/>
          <ellipse cx="1136" cy="431" rx="33" ry="33.500" stroke="#5d6a2a"/>
          <ellipse cx="1136" cy="431" rx="28" ry="29" stroke="#4c5a1e" stroke-width="2"/>
          <path d="M1118 458l13 22 11-22" stroke="#5d6a2a"/>
          <rect x="1125" y="479" width="13" height="6" stroke="#6b8a2c"/><rect x="1123" y="501" width="13" height="6" stroke="#6b8a2c"/><rect x="1123" y="526" width="13" height="6" stroke="#6b8a2c"/>
          <path d="M1165 422h21M1165 441h21" stroke="#0f7a1e" stroke-width="5.500"/>
          <path d="M1128 482h4M1127 504h5M1127 529h5" stroke="#1a9a2a" stroke-width="5"/>
          <path class="ratsb" d="M1051 388L1166 421M853 388L1166 440M640 384L1126 503M640 384L1128 528M663 380L656 700M703 380L675 700M1053 382L1131 480M1173 423L1135 480M1134 482L1133 527"/>
          <rect x="644.500" y="683.500" width="41" height="34.500" stroke="#cfd3bf"/>
          <path d="M648 712h2M658 712h2M668 712h2M678 712h2M648 694h2M658 694h2M668 694h2M678 694h2M655 718h10M672 718h12" stroke="#cfd3bf"/>
          <path d="M651 675h3v5M664 674l-2 5" stroke="#7a8a4a"/>
        </g>
        <rect x="650" y="697" width="11" height="11" fill="#6a9a7a"/>
        <circle cx="675" cy="702" r="6" fill="#4e9a5e"/>
        <path class="ratsb" d="M656 690v10M675 690v10" fill="none"/>
        <path d="M628 656h16M636 648v16" stroke="#fff" stroke-width="1.600"/>
      </svg>
    </div>

    <div class="dock">
      <section class="cmd">
        <div class="handle">
          <span class="hx">×</span><span class="harrow">◂</span><span class="hpin">⊥</span>
          <span class="hname">Comma</span>
          <i class="hdots"></i>
        </div>
        <pre class="log">Spin the element(s).
last angle:  90.000 Degrees
last pick:  -38.6300  -31.5600
last pick:  -41.1500  -41.9000
No element found.
Command &gt;</pre>
        <div class="scroll">
          <span class="sbtn">▲</span>
          <span class="sbtn">▼</span>
        </div>
      </section>
      <section class="world">
        <div class="handle wh">
          <span class="hx">×</span><span class="harrow">◂</span><span class="hpin">⊥</span>
          <span class="hname">WorldVi</span>
          <i class="hdots"></i>
        </div>
        <div class="wv"><div class="wvboard"><i class="wvmark"></i></div></div>
      </section>
    </div>
  </div>

  <aside class="tabs">
    <div class="tab t1"><span>Visibility</span></div>
    <div class="tab t2"><span>Find</span></div>
    <div class="tab t3"><span>Options</span></div>
  </aside>
</main>

<footer class="status">
  <div class="idle">Idle</div>
  <div class="cell green"></div>
  <div class="cell"></div>
  <div class="cell">Outline</div>
  <div class="cell">-45.1300, -21.3600</div>
  <div class="cell box">P</div>
  <div class="cell box">A</div>
  <div class="cell nullc">- (null)</div>
  <div class="cell"></div>
  <div class="cell">General edit</div>
  <div class="cell">Off</div>
  <div class="cell drc">DRC</div>
  <div class="cell">0</div>
</footer>

<footer class="taskbar">
  <div class="tk s60"><svg viewBox="0 0 20 20"><path d="M0 3l8-1.200V9.500H0zM9 1.600L20 0v9.500H9zM0 10.500h8v7.700L0 17zM9 10.500h11V20L9 18.400z" fill="#fff"/></svg></div>
  <div class="tk s60"><svg viewBox="0 0 20 20"><circle cx="12" cy="8" r="6.500" fill="none" stroke="#fff" stroke-width="1.200"/><path d="M7.500 12.500L1 19" stroke="#fff" stroke-width="1.200"/></svg></div>
  <div class="tk s63"><svg viewBox="0 0 20 20"><path d="M1 1h13M1 19h13M2 6h11v8H2z" fill="none" stroke="#fff" stroke-width="1.200"/><path d="M17 1v4M17 8v4M17 15v4" stroke="#fff" stroke-width="2"/></svg></div>
  <div class="tk s62 run"><svg class="big" viewBox="0 0 32 32"><path d="M16 16L16 1a15 15 0 0 1 13 7.500z" fill="#e33b2e"/><path d="M16 1A15 15 0 0 0 3 8.500L9.500 20z" fill="#e33b2e"/><path d="M3 8.500A15 15 0 0 0 14 31L22.500 20H9.500z" fill="#2f9e44"/><path d="M29 8.500H16L22.500 20 14 31A15 15 0 0 0 29 8.500z" fill="#f4c20d"/><circle cx="16" cy="16" r="7.500" fill="#fff"/><circle cx="16" cy="16" r="5.800" fill="#3f7fe6"/></svg></div>
  <div class="tk s62 run"><svg class="big" viewBox="0 0 32 32"><rect x="2" y="2" width="28" height="28" fill="#c8ccd0"/><rect x="2" y="2" width="10" height="14" fill="#2a2f36"/><rect x="7" y="7" width="14" height="14" fill="#22d4ec" stroke="#111" stroke-width="2"/><path d="M23 4h6M23 10h6v5M25 4v6" stroke="#d8302a" stroke-width="1.500" fill="none"/><path d="M24 30V22h6" stroke="#2238b8" stroke-width="2" fill="none"/><path d="M13 20v9l3-2 2 3 2-1-2-3h4z" fill="#111"/></svg></div>
  <div class="tk s62 run"><svg class="big" viewBox="0 0 32 32"><g stroke-width="2.500" fill="none"><path d="M16 16L5 5M16 16L12 3" stroke="#d8403a"/><path d="M16 16L21 3M16 16L28 6" stroke="#e8d040"/><path d="M16 16H30M16 16L28 27" stroke="#70d040"/><path d="M16 16L20 30M16 16L10 30" stroke="#30c8d8"/><path d="M16 16L3 26M16 16H2" stroke="#58a0e0"/></g><circle cx="16" cy="16" r="6" fill="#d8d8d8"/></svg></div>
  <div class="tk s62 run active"><svg class="big" viewBox="0 0 28 28"><use href="#allegro"/></svg></div>
  <div class="tk s62 run"><svg class="big" viewBox="0 0 32 32"><path d="M2 6h11l3 4h14v6H2z" fill="#f5cf5e"/><rect x="2" y="10" width="28" height="20" fill="#fbe29a"/><rect x="9" y="18" width="14" height="11" fill="#2f9fd8"/><rect x="13" y="22" width="6" height="3" fill="#fbe29a"/></svg></div>
  <div class="tk s62 run"><svg class="big" viewBox="0 0 32 32"><rect x="2" y="2" width="28" height="28" rx="5" fill="#1477f0"/><path d="M5 21l6-9 4 5 4-6 8 10c-3 1-5 0-8-4-2 3-5 5-7 3l-2-3-1 3c-1 2-3 2-4 1z" fill="#fff"/></svg></div>
  <div class="tray">
    <svg class="people" viewBox="0 0 24 24"><circle cx="15" cy="6" r="4" fill="none" stroke="#fff" stroke-width="1.500"/><circle cx="8" cy="12" r="3.300" fill="none" stroke="#fff" stroke-width="1.500"/><path d="M2 23c0-5 3-7 6-7s5 2 6 6M12 12c1-1 6-2 8 0 2 2 2 4 2 4" fill="none" stroke="#fff" stroke-width="1.500"/></svg>
    <svg class="chev" viewBox="0 0 16 10"><path d="M0 9l8-8 8 8" fill="none" stroke="#fff" stroke-width="1.200"/></svg>
    <svg class="batt" viewBox="0 0 20 12"><rect x=".5" y=".5" width="17" height="11" fill="none" stroke="#fff"/><rect x="2.500" y="2.500" width="9" height="7" fill="#fff"/><rect x="18" y="4" width="2" height="4" fill="#fff"/></svg>
    <svg class="wifi" viewBox="0 0 16 16"><path d="M.5 15C1 8 7 2 15 1M3.500 15C4 10 9 5 15 4.500M7 15c0-3 3-6 8-6.500" fill="none" stroke="#fff" stroke-dasharray="2 .7"/><circle cx="13" cy="14" r="1.500" fill="#fff"/></svg>
    <svg class="spk" viewBox="0 0 20 16"><path d="M1 5.500h3L9 1v14l-5-4.500H1z" fill="none" stroke="#fff"/><path d="M12 5c1 2 1 4 0 6M14.500 3c2 3 2 7 0 10" fill="none" stroke="#fff"/><path d="M18 2c1.500 3 1.500 9 0 12" fill="none" stroke="#555"/></svg>
    <span class="ime">中</span>
    <div class="clock"><span class="time">9:32</span><span class="date"><em>20</em>2024/10/15 09:32:37</span></div>
    <svg class="notif" viewBox="0 0 20 20"><path d="M.5 16.500v-16h19v16" fill="none" stroke="#fff"/></svg>
  </div>
</footer>
</body>
</html>
```

FILE: styles.css
```css
* { box-sizing: border-box; }
html, body { margin: 0; height: 100%; }
body {
  width: 1920px;
  height: 1080px;
  overflow: hidden;
  background: #fff;
  display: flex;
  flex-direction: column;
  font-family: "Liberation Sans", Arial, sans-serif;
  color: #111;
}
.defs { position: absolute; }

/* header */
.chrome { height: 57px; flex: none; border-bottom: 3px solid #d2190f; }
.titlebar { height: 28px; display: flex; align-items: center; padding-left: 3px; }
.appicon { width: 22px; height: 22px; margin-right: 2px; flex: none; }
.title { font-family: "Open Sans", sans-serif; font-size: 15.900px; color: #111; white-space: pre; }
.winctl { margin-left: auto; display: flex; gap: 44px; margin-right: 25px; }
.winctl svg { width: 14px; height: 14px; }
.menubar { height: 26px; display: flex; justify-content: space-between; align-items: center; }
.menu { display: flex; padding-left: 9px; font-family: "Open Sans", sans-serif; font-size: 14.800px; color: #333; margin-top: -1px; }
.menu span:nth-child(1) { width: 41px; }
.menu span:nth-child(2) { width: 44px; }
.menu span:nth-child(3) { width: 50px; }
.menu span:nth-child(4) { width: 49px; }
.menu span:nth-child(5) { width: 70px; }
.menu span:nth-child(6) { width: 59px; }
.menu span:nth-child(7) { width: 62px; }
.menu span:nth-child(8) { width: 58px; }
.menu span:nth-child(9) { width: 54px; }
.menu span:nth-child(10) { width: 80px; }
.menu span:nth-child(11) { width: 59px; }
.menu span:nth-child(12) { width: 74px; }
.menu span:nth-child(13) { width: 109px; }
.menu span:nth-child(14) { width: 56px; }
.logo { font-family: "DejaVu Sans", sans-serif; font-weight: 700; font-size: 22px; letter-spacing: 3.500px; color: #2c2c2c; margin-right: 6px; transform: scaleX(.81); transform-origin: right; }

/* horizontal toolbars */
.toolbars { flex: none; height: 87px; }
.tbrow { display: flex; background: linear-gradient(#dedede, #f4f4f4 25%, #ececec 70%, #cfcfcf); }
.r1 { height: 43px; width: 1554px; padding-bottom: 3px; }
.r2 { height: 44px; width: 1632px; padding-bottom: 2px; }
.grp { display: flex; align-items: center; flex: none; border-left: 1px dashed #444; margin-bottom: -3px; }
.r2 .grp { margin-bottom: -2px; }
.grp:first-child { border-left: 0; padding-left: 1px; }
.grp.grow { flex: 1; }
.grp.nudge { padding-left: 2px; }
.w133 { width: 133px; } .w323 { width: 323px; } .w445 { width: 445px; } .w288 { width: 288px; }
.w405 { width: 405px; } .w135 { width: 135px; } .w365 { width: 365px; } .w57 { width: 57px; } .w210 { width: 210px; }
.grip { width: 3px; height: 27px; margin: 0 0 0 3px; flex: none; background: repeating-linear-gradient(#1a74cf 0 4px, transparent 4px 6px); }
.grp.nudge .grip { margin-left: 1px; }
.grp b { flex: none; width: 38.600px; display: flex; justify-content: center; margin-top: -3px; }
.r2 .grp b { margin-top: -2px; }
.grp b.narrow-a { width: 33px; margin-left: 2px; }
.grp b.narrow { width: 28.500px; }
.grp b.narrow-b { width: 30px; }
.grp b.pin { margin-left: 3px; }
.grp svg { width: 27px; height: 27px; overflow: visible; filter: blur(.35px); }

/* svg real-text styles */
.t3d { font: 700 24px "Liberation Sans", sans-serif; fill: #8fb4e0; stroke: #5f8cc0; stroke-width: .8; }
.tflip { font: 700 8px "Liberation Mono", monospace; fill: #f4e0a0; text-anchor: middle; }
.tsm { font: 700 7.500px "Liberation Mono", monospace; fill: #fff; text-anchor: middle; }
.t123 { font: 11px "Liberation Sans", sans-serif; fill: #555; text-anchor: middle; }
.todb { font: 700 8px "Liberation Sans", sans-serif; fill: #fff; text-anchor: middle; }
.tr { font: 700 6.500px "Liberation Sans", sans-serif; fill: #333; text-anchor: middle; }
.ttp { font: 700 9px "Liberation Sans", sans-serif; fill: #7a3a00; text-anchor: middle; }
.thelp { font: 700 16px "Liberation Sans", sans-serif; fill: #5f78ac; text-anchor: middle; }
.tu1 { font: 700 10px "Liberation Sans", sans-serif; fill: #b04a42; text-anchor: middle; }
.tabc { font: 16px "Liberation Sans", sans-serif; fill: #8a8a8a; }

/* work area */
.work { flex: none; height: 859px; display: flex; }
.lefttools { flex: none; width: 62px; display: flex; flex-direction: column; padding-top: 1px; }
.vgrp { display: flex; flex-direction: column; width: 42px; background: linear-gradient(90deg, #fbfbfb, #f2f2f2 55%, #cfcfcf); align-items: center; flex: none; }
.vg1 { height: 132px; padding-top: 3px; }
.vg2 { height: 329px; margin-top: 26px; padding-top: 5px; }
.vg3 { height: 170px; margin-top: 8px; padding-top: 3px; }
.vg4 { height: 191px; width: 58px; margin-top: 2px; padding-top: 3px; background: linear-gradient(90deg, #f4f4f4, #ececec 70%, #c8c8c8); overflow: hidden; }
.vgrip { width: 30px; height: 4px; flex: none; background: repeating-linear-gradient(90deg, #1a74cf 0 4px, transparent 4px 6px); }
.vgrip.wide { width: 48px; margin-left: -2px; }
.vgrp b { flex: none; height: 38.900px; width: 100%; display: flex; align-items: center; justify-content: center; padding-right: 1px; }
.vgrp svg { filter: blur(.35px); }
.vg1 svg, .vg2 svg, .vg3 svg { width: 27px; height: 27px; }
.vg4 svg { width: 32px; height: 30px; }

.center { flex: none; width: 1818px; display: flex; flex-direction: column; }
.canvas { width: 1817px; height: 737px; background: #000; border-top: 3px solid #8a8a8a; border-left: 1px solid #a0a0a0; flex: none; }
.pcb { display: block; width: 1815px; height: 734px; filter: blur(.3px); }
.rats { fill: none; stroke: #1fb6e6; stroke-width: 2.800; }
.rats.thick { stroke: #18c4f6; stroke-width: 5; }
.ratsb { stroke: #2cb4dc; stroke-width: 1.200; fill: none; }

.dock { height: 122px; padding-top: 9px; display: flex; }
.handle { flex: none; width: 20px; background: linear-gradient(90deg, #dfe6ef, #f2f4f7); display: flex; flex-direction: column; align-items: center; color: #222; padding-right: 2px; }
.hx { font: 700 18px/16px "Liberation Sans", sans-serif; margin-top: 3px; }
.harrow { font-size: 9px; line-height: 16px; }
.hpin { font-size: 14px; line-height: 10px; margin-top: 2px; transform: rotate(180deg); }
.hname { writing-mode: vertical-rl; transform: rotate(180deg); font-size: 13.500px; white-space: nowrap; color: #24324a; margin-top: 4px; }
.hdots { width: 11px; height: 5px; margin-top: auto; margin-bottom: 4px; background: repeating-linear-gradient(90deg, #1a74cf 0 4px, transparent 4px 6px); }

.cmd { flex: none; width: 1450px; margin-left: 1px; height: 110px; display: flex; border: 1px solid #8f8f8f; border-bottom: 2px solid #aaa; }
.log { flex: 1; margin: 0; height: 103px; padding: 1px 0 0 1px; font: 14px/16.200px "Liberation Sans", sans-serif; color: #222; border: 1px solid #909090; border-left: 2px solid #888; letter-spacing: -.2px; }
.scroll { flex: none; width: 21px; height: 103px; display: flex; flex-direction: column; justify-content: space-between; }
.sbtn { height: 21px; font-size: 12px; display: flex; align-items: center; justify-content: center; border-right: 2px solid #aaa; border-bottom: 2px solid #aaa; color: #111; }

.world { flex: none; width: 358px; margin-left: 8px; height: 110px; display: flex; border-right: 2px solid #aaa; border-bottom: 2px solid #aaa; }
.wh { margin-right: 4px; }
.wv { flex: 1; background: #000; margin-top: 3px; padding: 3px 0 5px 6px; }
.wvboard { width: 136px; height: 96px; border: 1px solid #8a8a8a; position: relative; }
.wvmark { position: absolute; left: 7px; bottom: 0; width: 12px; height: 14px; border: 1.500px solid #fff; }

.tabs { flex: none; width: 40px; padding: 29px 4px 0 12px; display: flex; flex-direction: column; }
.tab { width: 24px; border-left: 1px solid #a9b8c8; border-top: 1.500px solid #a9b8c8; padding: 5px 0 0 1px; }
.t1 { height: 84px; } .t2 { height: 85px; } .t3 { height: 85px; border-bottom: 1.500px solid #bbb; }
.tab span { writing-mode: vertical-rl; font-size: 16px; letter-spacing: .3px; color: #222; }

/* status bar */
.status { flex: none; height: 27px; display: grid; grid-template-columns: 774px 66px 167px 154px 167px 19px 26px 128px 54px 153px 91px 67px 54px; border-top: 3px solid #bdbdbd; font-size: 14px; letter-spacing: -.35px; color: #222; padding-bottom: 2px; }
.idle { padding-left: 3px; line-height: 24px; border-left: 1px solid #999; }
.cell { border-left: 2px solid #a8a8a8; display: flex; align-items: center; justify-content: center; margin-top: 1px; padding-right: 4px; }
.cell.nullc { padding-right: 0; }
.green { background: #0bdc0b; border: 0; margin-top: 2px; }
.box { border: 1px solid #333; margin: 2px 1px 1px 1px; padding: 0; }
.drc { background: #fb1a0c; color: #8d1512; border: 0; margin-right: 2px; padding: 0; }

/* taskbar */
.taskbar { flex: 1; background: #000; display: flex; align-items: stretch; }
.tk { flex: none; display: flex; align-items: center; justify-content: center; position: relative; }
.s60 { width: 60px; } .s63 { width: 63px; } .s62 { width: 62px; }
.tk svg { width: 20px; height: 20px; }
.tk svg.big { width: 32px; height: 32px; }
.run::after { content: ""; position: absolute; left: 6px; right: 6px; bottom: 0; height: 3px; background: #76b4e8; }
.active { background: #2e3136; }
.active::after { left: 0; right: 0; }
.tray { margin-left: auto; display: flex; align-items: center; color: #fff; position: relative; }
.tray::after { content: ""; position: absolute; right: 5px; top: 3px; bottom: 8px; width: 1px; background: #333; }
.tray svg { flex: none; }
.people { width: 20px; height: 20px; margin-right: 27px; }
.chev { width: 16px; height: 10px; margin-right: 13px; }
.batt { width: 19px; height: 12px; margin-right: 13px; }
.wifi { width: 16px; height: 16px; margin-right: 9px; }
.spk { width: 20px; height: 16px; margin-right: 11px; }
.ime { font: 17px "Noto Sans CJK SC", sans-serif; width: 20px; margin-right: 8px; }
.clock { width: 144px; display: flex; flex-direction: column; align-items: flex-start; font-family: "Open Sans", sans-serif; }
.time { font-size: 15px; line-height: 20px; margin: 0 0 5px 26px; }
.date { font-size: 12.500px; line-height: 18px; white-space: nowrap; }
.date em { font-style: normal; font-size: 16px; margin-right: 5px; }
.notif { width: 20px; height: 20px; margin-left: -40px; margin-right: 31px; margin-bottom: 5px; }
```
